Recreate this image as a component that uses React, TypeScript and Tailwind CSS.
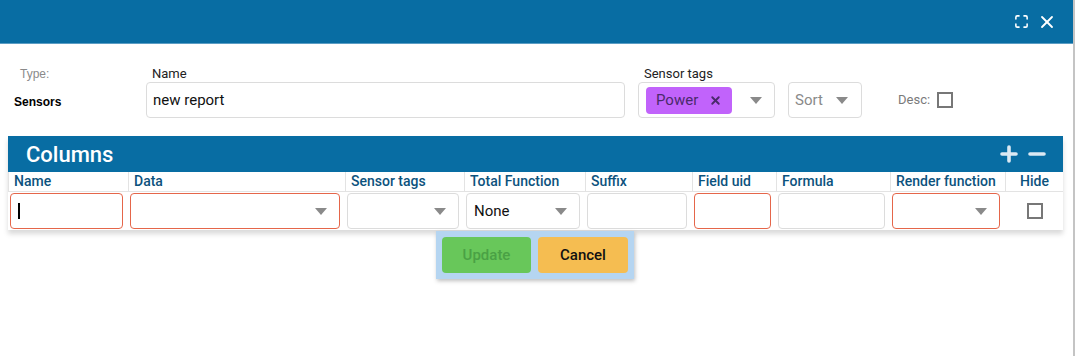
import { Maximize, X, Plus, Minus } from "lucide-react";

const caret = (
  <svg width="12" height="7" viewBox="0 0 12 7" className="shrink-0">
    <path d="M0 0h12L6 7z" fill="#8a8a8a" />
  </svg>
);

type Col = { label: string; w: string; kind: "text" | "select" | "check"; err?: boolean; value?: string };

const cols: Col[] = [
  { label: "Name", w: "w-[120px]", kind: "text", err: true, value: "|" },
  { label: "Data", w: "w-[217px]", kind: "select", err: true },
  { label: "Sensor tags", w: "w-[119px]", kind: "select" },
  { label: "Total Function", w: "w-[121px]", kind: "select", value: "None" },
  { label: "Suffix", w: "w-[107px]", kind: "text" },
  { label: "Field uid", w: "w-[84px]", kind: "text", err: true },
  { label: "Formula", w: "w-[114px]", kind: "text" },
  { label: "Render function", w: "w-[115px]", kind: "select", err: true },
  { label: "Hide", w: "flex-1", kind: "check" },
];

export default function App() {
  return (
    <div className="h-[356px] w-[1079px] overflow-hidden bg-white font-['Roboto',sans-serif]">
      <div className="relative flex h-full w-[1075px] flex-col border-r-2 border-[#c4c4c4] bg-white">
        {/* title bar */}
        <div className="flex h-[44px] items-center justify-end gap-[8px] border-b border-[#5b9dc4] bg-[#086da3] pr-[16px] text-white">
          <Maximize size={15} strokeWidth={2.5} />
          <X size={20} strokeWidth={2.2} />
        </div>

        {/* form */}
        <div className="mt-[21px] flex items-end pl-[14px]">
          <div className="flex w-[132px] flex-col font-['Liberation_Sans',Arial,sans-serif] leading-[18px]">
            <span className="pl-[6px] text-[12px] text-[#8a8a8a]">Type:</span>
            <span className="mt-[10px] mb-[7px] text-[12px] font-bold text-black">Sensors</span>
          </div>
          <div className="flex w-[479px] flex-col">
            <span className="pl-[6px] text-[13px] leading-[16px] text-[#222]">Name</span>
            <div className="flex h-[36px] items-center rounded border border-[#dcdcdc] px-[6px] text-[15px] text-[#111]">
              new report
            </div>
          </div>
          <div className="ml-[13px] flex w-[137px] flex-col">
            <span className="pl-[6px] text-[13px] leading-[16px] text-[#222]">Sensor tags</span>
            <div className="flex h-[36px] items-center rounded border border-[#dcdcdc] pl-[7px] pr-[12px]">
              <span className="flex h-[27px] items-center gap-[11px] rounded-sm bg-[#c163fb] px-[10px] text-[15px] text-[#4a2a6b]">
                Power
                <X size={13} strokeWidth={3.5} />
              </span>
              <span className="ml-auto">{caret}</span>
            </div>
          </div>
          <div className="ml-[13px] flex h-[36px] w-[74px] items-center justify-between rounded border border-[#dcdcdc] pl-[6px] pr-[13px] text-[15px] text-[#8a8a8a]">
            Sort
            {caret}
          </div>
          <div className="ml-[36px] flex h-[36px] items-center gap-[7px] text-[13px] text-[#7a7a7a]">
            Desc:
            <span className="h-[16px] w-[16px] border-2 border-[#777]" />
          </div>
        </div>

        {/* columns panel */}
        <div className="mx-[8px] mt-[18px] w-[1055px] shadow-[0_4px_5px_rgba(0,0,0,0.15)]">
          <div className="flex h-[36px] items-center justify-between bg-[#086da3] pl-[18px] pr-[14px] text-white">
            <span className="text-[22px] font-medium">Columns</span>
            <div className="flex items-center gap-[4px] text-[#dbe9f3]">
              <Plus size={24} strokeWidth={3.6} />
              <Minus size={24} strokeWidth={3.6} />
            </div>
          </div>
          <div className="flex">
            {cols.map((c) => (
              <div key={c.label} className={`${c.w} flex flex-col`}>
                <div
                  className={`h-[20px] whitespace-nowrap border-b border-l border-[#e3e3e3] px-[5px] text-[14px] font-medium leading-[19px] text-[#0c527d] ${
                    c.kind === "check" ? "text-center" : ""
                  }`}
                >
                  {c.label}
                </div>
                <div className="flex h-[38px] items-center pl-[2px] pr-[5px] pt-[1px] pb-[1px]">
                  {c.kind === "check" ? (
                    <div className="flex w-full justify-center pl-[5px]">
                      <span className="h-[16px] w-[16px] border-2 border-[#777]" />
                    </div>
                  ) : (
                    <div
                      className={`flex h-[36px] w-full items-center rounded border px-[7px] text-[15px] text-[#111] ${
                        c.err ? "border-[#e5664a]" : "border-[#dcdcdc]"
                      }`}
                    >
                      {c.value === "|" ? <span className="h-[16px] w-[2px] bg-black" /> : c.value}
                      {c.kind === "select" && <span className="ml-auto mr-[5px]">{caret}</span>}
                    </div>
                  )}
                </div>
              </div>
            ))}
          </div>
        </div>

        {/* popup */}
        <div className="absolute left-[436px] top-[231px] flex gap-[7px] bg-[#b5d5f1] p-[6px] shadow-[1px_2px_4px_rgba(0,0,0,0.25)]">
          <button className="h-[36px] w-[89px] rounded bg-[#68c75a] text-[15px] font-medium text-[#4aa145]">
            Update
          </button>
          <button className="h-[36px] w-[90px] rounded bg-[#f5bd51] text-[15px] font-medium text-[#111]">
            Cancel
          </button>
        </div>
      </div>
    </div>
  );
}
